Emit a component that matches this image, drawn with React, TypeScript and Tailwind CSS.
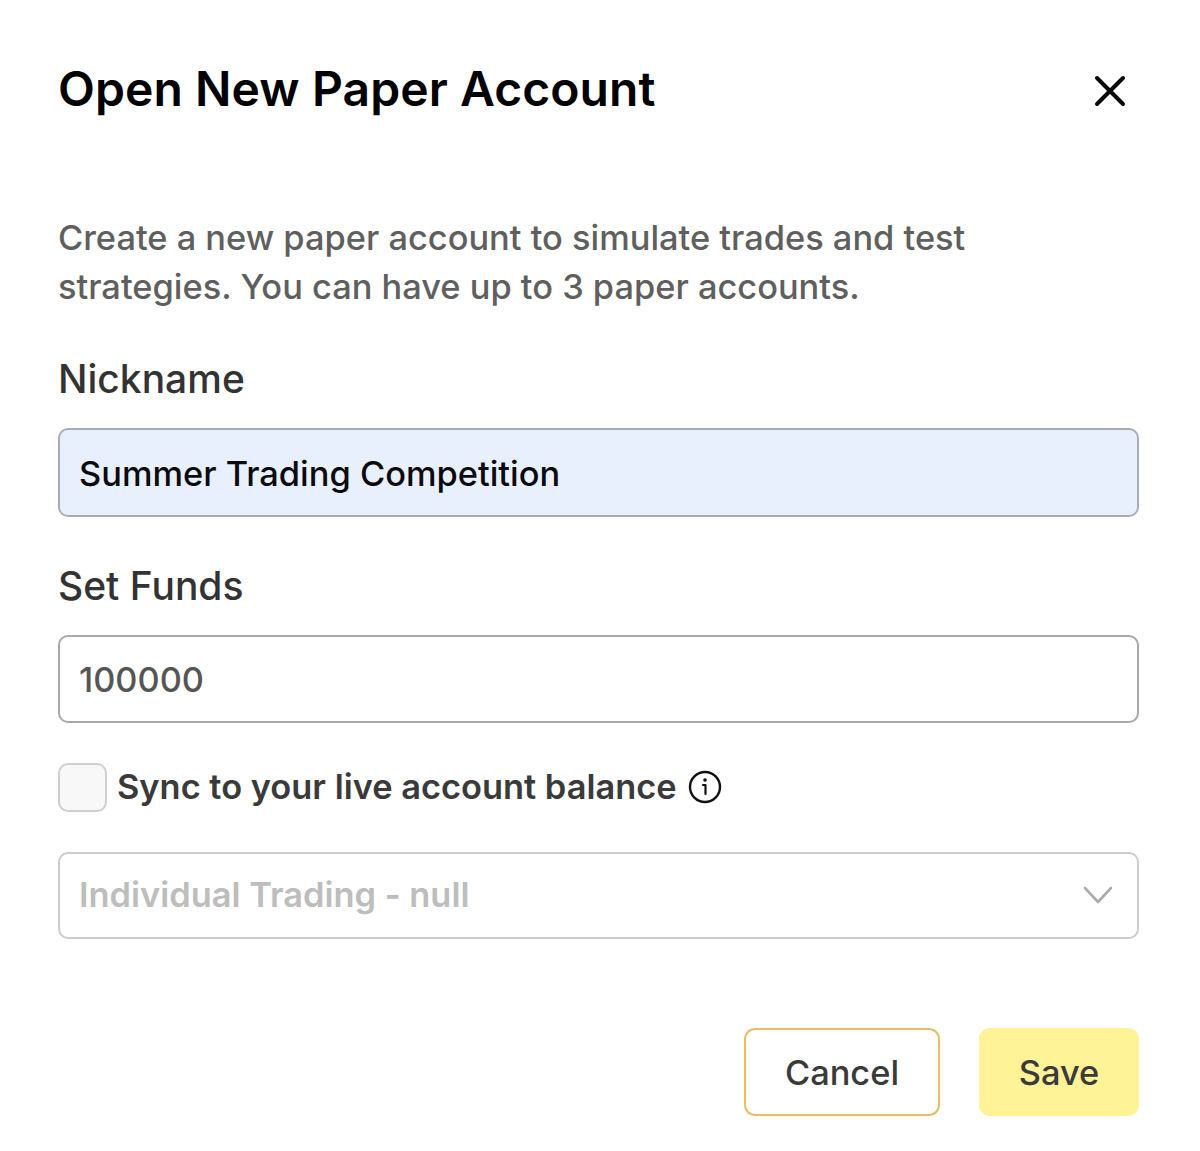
export default function App() {
  return (
    <div className="h-[1151px] w-[1200px] bg-white px-[58px] pt-[59px] font-['Inter',sans-serif] text-[#333]">
      {/* Header */}
      <div className="flex h-[60px] items-start justify-between">
        <h1 className="text-[48px] leading-[60px] font-semibold tracking-[0.08px] text-black">Open New Paper Account</h1>
        <button className="mt-[16px] mr-[16px]" aria-label="Close">
          <svg width="32" height="32" viewBox="0 0 32 32" fill="none">
            <path d="M3 3L29 29M29 3L3 29" stroke="#0a0a0a" strokeWidth="4" strokeLinecap="round" />
          </svg>
        </button>
      </div>

      <p className="mt-[94px] w-[960px] text-[34.4px] leading-[49px] font-medium text-[#5f5f5f]">
        Create a new paper account to simulate trades and test strategies. You can have up to 3 paper accounts.
      </p>

      <div className="mt-[43px] text-[39px] leading-[50px] font-medium text-[#333]">Nickname</div>
      <div className="mt-[24px] flex h-[89px] w-[1081px] items-center rounded-[10px] border-2 border-[#a9acb2] bg-[#e8f0fd] px-[19px] pt-[2px] text-[34.4px] font-medium text-[#0b0b0f]">
        Summer Trading Competition
      </div>

      <div className="mt-[44px] text-[39px] leading-[50px] font-medium text-[#333]">Set Funds</div>
      <div className="mt-[24px] flex h-[88px] w-[1081px] items-center rounded-[10px] border-2 border-[#a9a9a9] px-[19px] pt-[2px] text-[34.3px] font-medium text-[#555]">
        100000
      </div>

      {/* Sync checkbox */}
      <div className="mt-[39px] flex h-[50px] items-center">
        <div className="h-[49px] w-[49px] rounded-[10px] border-2 border-[#cfcfcf] bg-[#f8f8f8]" />
        <span className="ml-[10px] text-[34.4px] font-semibold text-[#3a3a3a]">Sync to your live account balance</span>
        <svg className="ml-[11px]" width="34" height="34" viewBox="0 0 34 34" fill="none">
          <circle cx="17" cy="17" r="15" stroke="#111" strokeWidth="2.4" />
          <path d="M15 15H17.5V24" stroke="#111" strokeWidth="2.2" strokeLinecap="round" strokeLinejoin="round" />
          <circle cx="17" cy="10" r="1.8" fill="#111" />
        </svg>
      </div>

      {/* Account select */}
      <div className="mt-[40px] flex h-[87px] w-[1081px] items-center justify-between rounded-[10px] border-2 border-[#cccccc] pr-[24px] pb-[2px] pl-[19px] text-[34.4px] font-semibold text-[#bdbdbd]">
        Individual Trading - null
        <svg width="30" height="18" viewBox="0 0 30 18" fill="none">
          <path d="M2 2L15 16L28 2" stroke="#ababab" strokeWidth="2.6" strokeLinecap="round" strokeLinejoin="round" />
        </svg>
      </div>

      {/* Actions */}
      <div className="mt-[89px] flex w-[1081px] justify-end gap-[39px]">
        <button className="h-[88px] w-[196px] rounded-[11px] border-2 border-[#e8bf62] bg-white pt-[2px] text-[34.4px] font-medium text-[#3a3a3a]">
          Cancel
        </button>
        <button className="h-[88px] w-[160px] rounded-[11px] bg-[#fff297] pt-[2px] text-[34.4px] font-medium text-[#3a3a3a]">
          Save
        </button>
      </div>
    </div>
  );
}
